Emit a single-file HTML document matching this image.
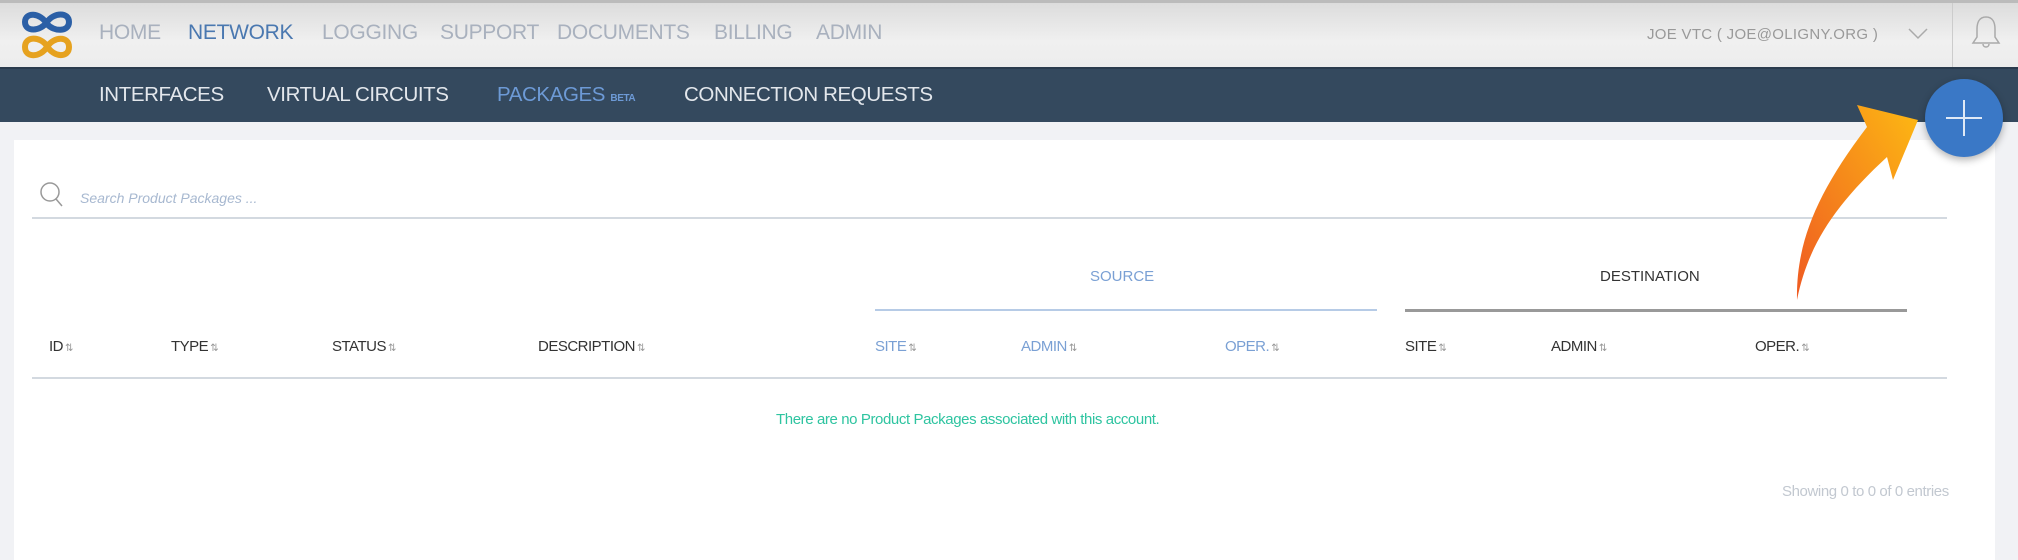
<!DOCTYPE html>
<html><head><meta charset="utf-8"><style>
*{margin:0;padding:0;box-sizing:border-box}
body{width:2018px;height:550px;overflow:hidden;background:#f1f2f5;font-family:"Liberation Sans",sans-serif;position:relative}
.top{position:absolute;left:0;top:0;width:2018px;height:67px;background:linear-gradient(#dcdcdc,#f0f0f0 60%,#ececec);border-top:3px solid #bbb}
.t{position:absolute;white-space:nowrap}
.nav{top:21px;font-size:21px;color:#a9b1be;letter-spacing:-0.3px}
.sub{position:absolute;left:0;top:67px;width:2018px;height:55px;background:#34495e;border-top:2px solid #2a3b4d}
.sn{top:17px;font-size:20.5px;color:#e3e7ec;letter-spacing:-0.4px}
.panel{position:absolute;left:14px;top:140px;width:1981px;height:420px;background:#fff}
.h{top:338px;font-size:15px;color:#333;letter-spacing:-0.5px}
.h i{font-style:normal;font-size:10px;color:#999;margin-left:2px}
.b{color:#7aa0d4}
</style></head><body>
<div class="top"></div>
<svg class="t" style="left:20px;top:8px" width="54" height="54" viewBox="0 0 54 54">
<g fill="none" stroke-width="6"><path d="M27 16 C20 4 5 4 5 14 C5 24 20 24 27 14 C34 4 49 4 49 14 C49 24 34 24 27 16" stroke="#2b5fa6"/>
<path d="M27 38 C20 28 5 28 5 39 C5 50 20 50 27 39 C34 28 49 28 49 39 C49 50 34 50 27 38" stroke="#e6a21f"/></g></svg>
<div class="t nav" style="left:99px">HOME</div>
<div class="t nav" style="left:188px;color:#4a78b0">NETWORK</div>
<div class="t nav" style="left:322px">LOGGING</div>
<div class="t nav" style="left:440px">SUPPORT</div>
<div class="t nav" style="left:557px">DOCUMENTS</div>
<div class="t nav" style="left:714px">BILLING</div>
<div class="t nav" style="left:816px">ADMIN</div>
<div class="t" style="left:1647px;top:26px;font-size:15px;color:#999;letter-spacing:0.3px">JOE VTC ( JOE@OLIGNY.ORG )</div>
<svg class="t" style="left:1908px;top:28px" width="20" height="12"><path d="M1 1 L10 10 L19 1" fill="none" stroke="#aaa" stroke-width="1.5"/></svg>
<div class="t" style="left:1952px;top:3px;width:1px;height:64px;background:#ccc"></div>
<svg class="t" style="left:1970px;top:14px" width="32" height="36"><path d="M16 3 C9 3 7 9 7 15 L7 23 L3 29 L29 29 L25 23 L25 15 C25 9 23 3 16 3 Z M13 30 C13 34 19 34 19 30" fill="none" stroke="#aaa" stroke-width="1.5"/></svg>
<div class="sub"></div>
<div class="t sn" style="left:99px;top:83px">INTERFACES</div>
<div class="t sn" style="left:267px;top:83px">VIRTUAL CIRCUITS</div>
<div class="t sn" style="left:497px;top:83px;color:#6d9ad6">PACKAGES <span style="font-size:10px;font-weight:bold">BETA</span></div>
<div class="t sn" style="left:684px;top:83px">CONNECTION REQUESTS</div>
<div class="panel"></div>
<svg class="t" style="left:38px;top:180px" width="28" height="30"><circle cx="12" cy="12" r="9" fill="none" stroke="#999" stroke-width="1.5"/><path d="M18 19 L24 26" stroke="#999" stroke-width="1.5"/></svg>
<div class="t" style="left:80px;top:190px;font-size:14px;font-style:italic;color:#a7b8d0">Search Product Packages ...</div>
<div class="t" style="left:32px;top:217px;width:1915px;height:2px;background:#d3d9e0"></div>
<div class="t" style="left:1090px;top:268px;font-size:15px;color:#7aa0d4">SOURCE</div>
<div class="t" style="left:1600px;top:268px;font-size:15px;color:#333">DESTINATION</div>
<div class="t" style="left:875px;top:309px;width:502px;height:2px;background:#b6cbe6"></div>
<div class="t" style="left:1405px;top:309px;width:502px;height:3px;background:#999"></div>
<div class="t h" style="left:49px">ID<i>⇅</i></div>
<div class="t h" style="left:171px">TYPE<i>⇅</i></div>
<div class="t h" style="left:332px">STATUS<i>⇅</i></div>
<div class="t h" style="left:538px">DESCRIPTION<i>⇅</i></div>
<div class="t h b" style="left:875px">SITE<i>⇅</i></div>
<div class="t h b" style="left:1021px">ADMIN<i>⇅</i></div>
<div class="t h b" style="left:1225px">OPER.<i>⇅</i></div>
<div class="t h" style="left:1405px">SITE<i>⇅</i></div>
<div class="t h" style="left:1551px">ADMIN<i>⇅</i></div>
<div class="t h" style="left:1755px">OPER.<i>⇅</i></div>
<div class="t" style="left:32px;top:377px;width:1915px;height:2px;background:#d3d9e0"></div>
<div class="t" style="left:776px;top:411px;font-size:15px;color:#2ec4a0;letter-spacing:-0.4px">There are no Product Packages associated with this account.</div>
<div class="t" style="left:1782px;top:483px;font-size:15px;color:#c2c8d0;letter-spacing:-0.4px">Showing 0 to 0 of 0 entries</div>
<div class="t" style="left:1925px;top:79px;width:78px;height:78px;border-radius:50%;background:#3a78c6;box-shadow:0 3px 8px rgba(0,0,0,0.3)"></div>
<svg class="t" style="left:1925px;top:79px" width="78" height="78"><path d="M39 21 V57 M21 39 H57" stroke="#dfe9f6" stroke-width="2"/></svg>
<svg class="t" style="left:1780px;top:95px" width="150" height="215">
<defs><linearGradient id="g" x1="0" y1="1" x2="1" y2="0"><stop offset="0" stop-color="#ef5a22"/><stop offset="1" stop-color="#fdb913"/></linearGradient></defs>
<path d="M17 205 C16 150 35 100 87 32 L77 10 L138 25 L113 85 L107 62 C55 110 28 150 17 205 Z" fill="url(#g)"/>
</svg>
</body></html>
